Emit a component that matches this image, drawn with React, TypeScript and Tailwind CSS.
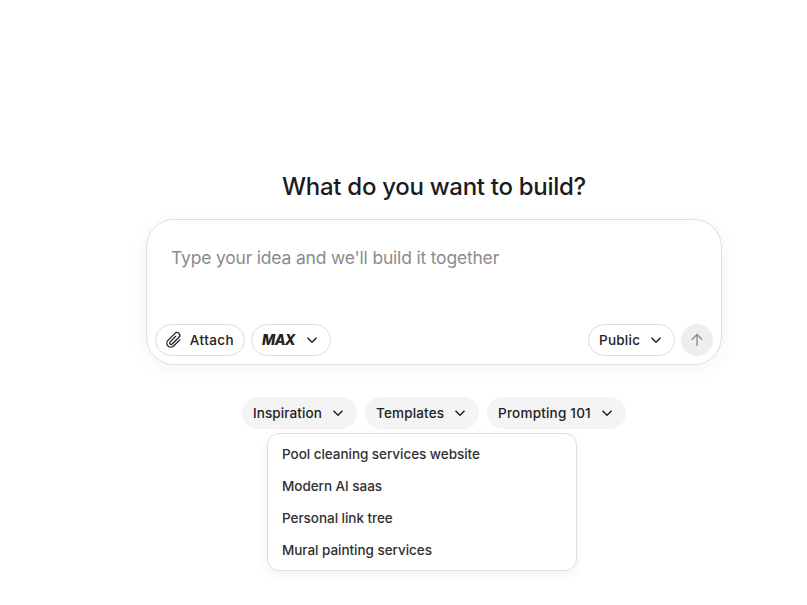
import type { ReactNode } from "react";

const prompts = [
  "Pool cleaning services website",
  "Modern AI saas",
  "Personal link tree",
  "Mural painting services",
];

function Chevron() {
  return (
    <svg className="h-4 w-4 shrink-0" viewBox="0 0 16 16" fill="none" stroke="currentColor" strokeWidth="1.5" aria-hidden="true">
      <path d="M3.5 5.7 8 10.2 12.5 5.7" />
    </svg>
  );
}

function Paperclip() {
  return (
    <svg className="h-4 w-4 shrink-0 overflow-visible" viewBox="0 0 16 16" fill="none" stroke="currentColor" strokeWidth="1.3" strokeLinecap="round" aria-hidden="true">
      <path transform="rotate(45 8 8)" d="M12 3.8v8.7a4 4 0 0 1-8 0V2.6a2.8 2.8 0 0 1 5.6 0v9.5a1.5 1.5 0 0 1-3 0V4.2" />
    </svg>
  );
}

function Pill({ className, children }: { className: string; children: ReactNode }) {
  return (
    <button type="button" className={`flex h-8 items-center justify-between whitespace-nowrap rounded-full text-[13.5px] font-medium ${className}`}>
      {children}
    </button>
  );
}

export default function App() {
  return (
    <main className="flex h-[605px] w-[807px] flex-col items-center overflow-hidden bg-white pl-[61px] pt-[170px] font-['Inter',sans-serif] text-[#222222]">
      <h1 className="whitespace-nowrap text-2xl font-medium leading-[34px] tracking-[-0.012em] text-[#1c1c1c]">What do you want to build?</h1>

      <section className="mt-[15px] flex h-[146px] w-[576px] flex-col justify-between rounded-[28px] border border-[#dedede] bg-white p-2 shadow-[0_4px_20px_rgba(0,0,0,0.05)]">
        <p className="whitespace-nowrap pl-4 pt-[15px] text-[17.5px] font-normal leading-[30px] tracking-[-0.011em] text-[#8b8b8b]">
          Type your idea and we'll build it together
        </p>
        <div className="flex items-center gap-1.5">
          <Pill className="w-[90px] border border-[#dedede] px-[10px]">
            <Paperclip />
            <span className="tracking-[0.03em]">Attach</span>
          </Pill>
          <Pill className="w-20 border border-[#dedede] px-[10px]">
            <span className="text-sm font-extrabold italic tracking-[-0.04em]">MAX</span>
            <Chevron />
          </Pill>
          <Pill className="ml-auto w-[87px] border border-[#dedede] px-[10px]">
            <span className="tracking-[0.018em]">Public</span>
            <Chevron />
          </Pill>
          <button type="button" aria-label="Send" className="flex h-8 w-8 items-center justify-center rounded-full bg-[#eeeeee] text-[#8b8b8b]">
            <svg className="h-4 w-4" viewBox="0 0 16 16" fill="none" stroke="currentColor" strokeWidth="1.3" aria-hidden="true">
              <path d="M8 14V2.5M2.8 7.7 8 2.5l5.2 5.2" />
            </svg>
          </button>
        </div>
      </section>

      <nav className="relative mt-8 flex gap-2">
        <Pill className="w-[115px] bg-[#f4f4f4] px-[11px]">
          <span className="tracking-[0.007em]">Inspiration</span>
          <Chevron />
        </Pill>
        <Pill className="w-[114px] bg-[#f4f4f4] px-[11px]">
          <span className="tracking-[0.012em]">Templates</span>
          <Chevron />
        </Pill>
        <Pill className="w-[139px] bg-[#f4f4f4] px-[11px]">
          <span className="tracking-[0.016em]">Prompting 101</span>
          <Chevron />
        </Pill>
        <ul className="absolute left-[25px] top-9 w-[310px] rounded-xl border border-[#dedede] bg-white py-1 text-[#303030] shadow-[0_4px_12px_rgba(0,0,0,0.05)]">
          {prompts.map((prompt) => (
            <li key={prompt} className="flex h-8 items-center px-[14px] text-[13.5px] font-medium tracking-[-0.003em]">
              {prompt}
            </li>
          ))}
        </ul>
      </nav>
    </main>
  );
}
